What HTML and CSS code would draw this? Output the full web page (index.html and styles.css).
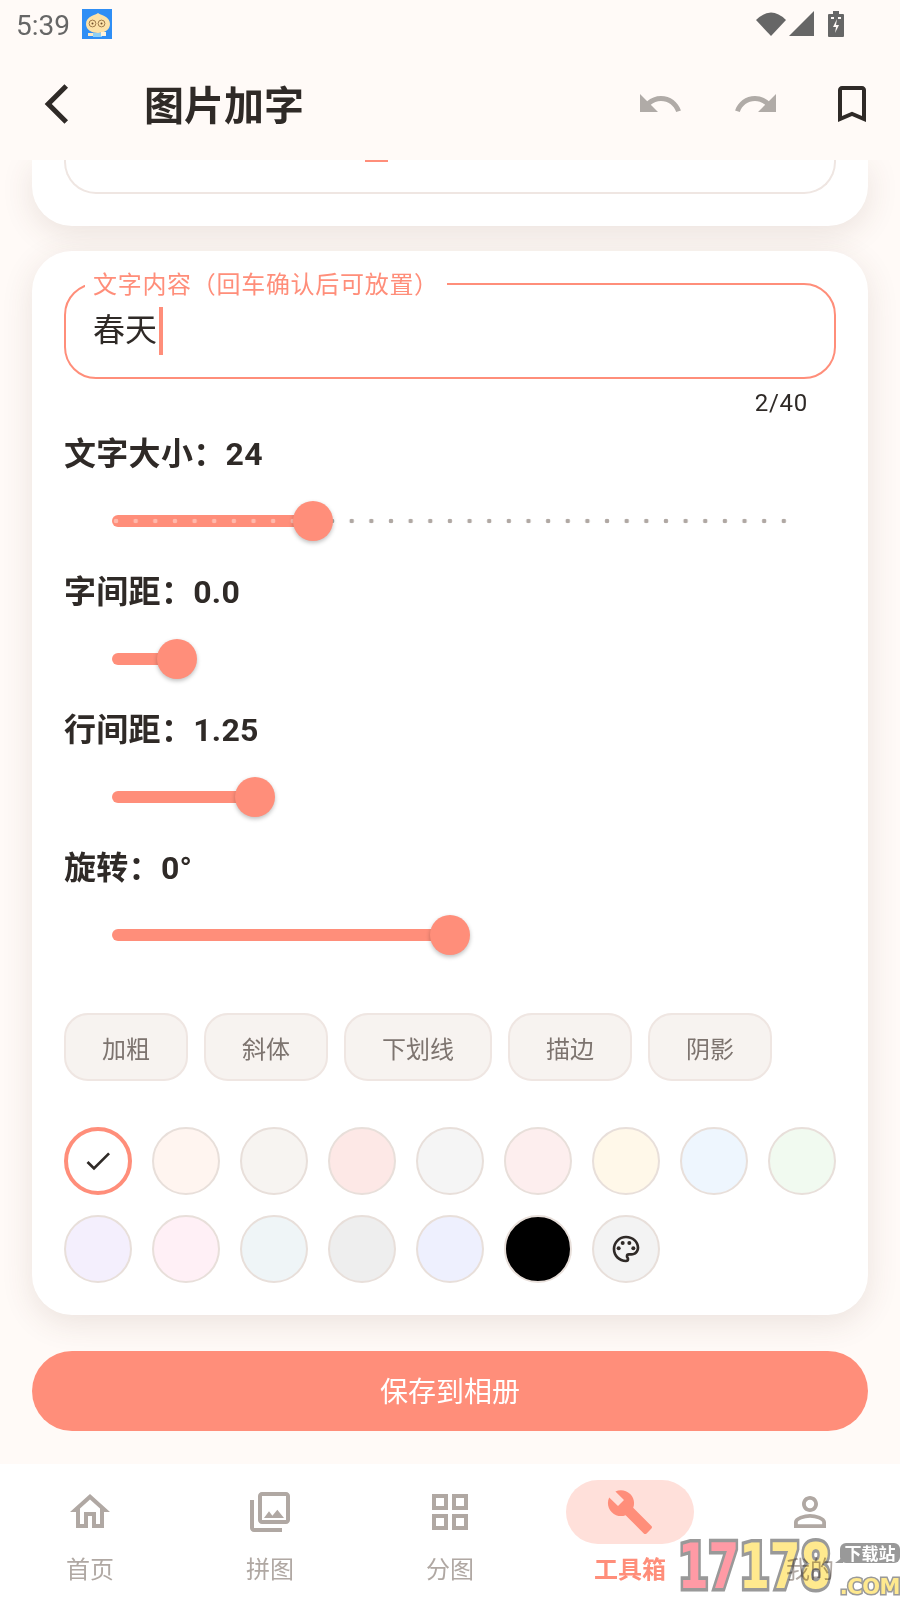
FILE: index.html
```html
<!DOCTYPE html>
<html lang="zh-CN">
<head>
<meta charset="UTF-8">
<meta name="viewport" content="width=device-width, initial-scale=1.0">
<title>图片加字</title>
<link rel="stylesheet" href="styles.css">
</head>
<body>

<div class="status-bar">
    <span class="clock">5:39</span>
    <svg class="app-badge" width="30" height="30" viewBox="0 0 30 30">
        <rect width="30" height="30" fill="#2f8ef5"/>
        <path d="M16 4c2 2 12 3 12 11 0 6-6 9-12 9S4 21 4 15C4 7 14 6 16 4z" fill="#fde2a8"/>
        <circle cx="10.500" cy="14.500" r="3.400" fill="none" stroke="#a07c4c"/>
        <circle cx="19.500" cy="14.500" r="3.400" fill="none" stroke="#a07c4c"/>
        <circle cx="10.500" cy="14.500" r="1" fill="#6b4a2a"/>
        <circle cx="19.500" cy="14.500" r="1" fill="#6b4a2a"/>
        <rect x="11" y="24" width="9" height="4" fill="#8fd0f5"/>
        <rect x="6" y="24" width="5" height="3" fill="#fde9c4"/>
        <rect x="19" y="23" width="5" height="4" fill="#fff3dc"/>
    </svg>
    <span class="status-right">
        <svg class="wifi" width="30" height="25" viewBox="0 0 30 25"><path d="M0 9Q15-6 30 9L15 25z" fill="#666"/></svg>
        <svg class="signal" width="25" height="25" viewBox="0 0 25 25"><path d="M25 0v25H0z" fill="#666"/></svg>
        <svg class="battery" width="16" height="26" viewBox="0 0 16 26">
            <path d="M5 0h6v3h4a1 1 0 0 1 1 1v21a1 1 0 0 1-1 1H1a1 1 0 0 1-1-1V4a1 1 0 0 1 1-1h4z" fill="#666"/>
            <path d="M9 8l-4 8h3l-1 6 4-8H8z" fill="#fffaf7"/>
            <path d="M3 6h3v2H3zM10 6h3v2h-3z" fill="#fffaf7"/>
        </svg>
    </span>
</div>

<header class="top-bar">
    <svg class="back-icon" width="48" height="48" viewBox="0 0 24 24"><path d="M17.51 3.87L15.73 2.1 5.84 12l9.9 9.9 1.77-1.77L9.38 12l8.13-8.13z"/></svg>
    <h1>图片加字</h1>
    <div class="top-actions">
        <svg class="muted-icon" width="48" height="48" viewBox="0 0 24 24"><path d="M12.5 8c-2.65 0-5.05.99-6.9 2.6L2 7v9h9l-3.62-3.62c1.39-1.16 3.16-1.88 5.12-1.88 3.54 0 6.55 2.31 7.6 5.5l2.37-.78C21.08 11.03 17.15 8 12.5 8z"/></svg>
        <svg class="muted-icon" width="48" height="48" viewBox="0 0 24 24"><path d="M18.4 10.6C16.55 8.99 14.15 8 11.5 8c-4.65 0-8.58 3.03-9.96 7.22L3.9 16c1.05-3.19 4.05-5.5 7.6-5.5 1.95 0 3.73.72 5.12 1.88L13 16h9V7l-3.6 3.6z"/></svg>
        <svg class="dark-icon" width="48" height="48" viewBox="0 0 24 24"><path d="M17 3H7c-1.1 0-2 .9-2 2v16l7-3 7 3V5c0-1.1-.9-2-2-2zm0 15l-5-2.18L7 18V5h10v13z"/></svg>
    </div>
</header>

<main class="content">
    <section class="card card-clipped">
        <div class="clipped-box"><span class="clipped-mark"></span></div>
    </section>

    <section class="card card-editor">
        <div class="text-field">
            <span class="field-label">文字内容（回车确认后可放置）</span>
            <span class="field-value">春天</span><span class="caret"></span>
        </div>
        <div class="counter">2/40</div>

        <div class="setting-title">文字大小：24</div>
        <div class="slider slider-ticks">
            <div class="track track-ticks" style="width:201px"><span class="thumb"></span></div>
        </div>

        <div class="setting-title">字间距：0.0</div>
        <div class="slider">
            <div class="track" style="width:65px"><span class="thumb"></span></div>
        </div>

        <div class="setting-title">行间距：1.25</div>
        <div class="slider">
            <div class="track" style="width:143px"><span class="thumb"></span></div>
        </div>

        <div class="setting-title">旋转：0°</div>
        <div class="slider">
            <div class="track" style="width:338px"><span class="thumb"></span></div>
        </div>

        <div class="chips">
            <span class="chip">加粗</span>
            <span class="chip">斜体</span>
            <span class="chip">下划线</span>
            <span class="chip">描边</span>
            <span class="chip">阴影</span>
        </div>

        <div class="swatches">
            <span class="swatch swatch-selected">
                <svg width="32" height="32" viewBox="0 0 24 24"><path d="M9 16.17L4.83 12l-1.42 1.41L9 19 21 7l-1.41-1.41z" fill="#2f2a27"/></svg>
            </span>
            <span class="swatch c-peach"></span>
            <span class="swatch c-stone"></span>
            <span class="swatch c-rose"></span>
            <span class="swatch c-grey"></span>
            <span class="swatch c-blush"></span>
            <span class="swatch c-cream"></span>
            <span class="swatch c-sky"></span>
            <span class="swatch c-mint"></span>
            <span class="swatch c-lilac"></span>
            <span class="swatch c-pink"></span>
            <span class="swatch c-ice"></span>
            <span class="swatch c-silver"></span>
            <span class="swatch c-periwinkle"></span>
            <span class="swatch c-black"></span>
            <span class="swatch c-picker">
                <svg width="32" height="32" viewBox="0 0 24 24" fill="#2f2a27">
                    <path d="M12 22C6.49 22 2 17.51 2 12S6.49 2 12 2s10 4.04 10 9c0 3.31-2.69 6-6 6h-1.77c-.28 0-.5.22-.5.5 0 .12.05.23.13.33.41.47.64 1.06.64 1.67A2.5 2.5 0 0 1 12 22zm0-18c-4.41 0-8 3.59-8 8s3.59 8 8 8c.28 0 .5-.22.5-.5a.54.54 0 0 0-.14-.35c-.41-.46-.63-1.05-.63-1.65a2.5 2.5 0 0 1 2.5-2.5H16c2.21 0 4-1.79 4-4 0-3.86-3.59-7-8-7z"/>
                    <circle cx="6.5" cy="11.5" r="1.5"/><circle cx="9.5" cy="7.5" r="1.5"/><circle cx="14.5" cy="7.5" r="1.5"/><circle cx="17.5" cy="11.5" r="1.5"/>
                </svg>
            </span>
        </div>
    </section>

    <button class="save-button">保存到相册</button>
</main>

<nav class="bottom-nav">
    <div class="nav-item">
        <span class="nav-icon"><svg width="48" height="48" viewBox="0 0 24 24"><path d="M12 5.69l5 4.5V18h-2v-6H9v6H7v-7.81l5-4.5M12 3L2 12h3v8h6v-6h2v6h6v-8h3L12 3z"/></svg></span>
        <span class="nav-label">首页</span>
    </div>
    <div class="nav-item">
        <span class="nav-icon"><svg width="48" height="48" viewBox="0 0 24 24"><path d="M20 4v12H8V4h12m0-2H8c-1.1 0-2 .9-2 2v12c0 1.1.9 2 2 2h12c1.1 0 2-.9 2-2V4c0-1.1-.9-2-2-2zm-8.5 9.67l1.69 2.26 2.48-3.1L19 15H9zM2 6v14c0 1.1.9 2 2 2h14v-2H4V6H2z"/></svg></span>
        <span class="nav-label">拼图</span>
    </div>
    <div class="nav-item">
        <span class="nav-icon"><svg width="48" height="48" viewBox="0 0 24 24"><path d="M3 3v8h8V3H3zm6 6H5V5h4v4zm-6 4v8h8v-8H3zm6 6H5v-4h4v4zm4-16v8h8V3h-8zm6 6h-4V5h4v4zm-6 4v8h8v-8h-8zm6 6h-4v-4h4v4z"/></svg></span>
        <span class="nav-label">分图</span>
    </div>
    <div class="nav-item nav-active">
        <span class="nav-icon"><svg width="48" height="48" viewBox="0 0 24 24"><path d="M22.7 19l-9.1-9.1c.9-2.3.4-5-1.5-6.9-2-2-5-2.4-7.4-1.3L9 6 6 9 1.6 4.7C.4 7.1.9 10.1 2.9 12.1c1.9 1.9 4.6 2.4 6.9 1.5l9.1 9.1c.4.4 1 .4 1.4 0l2.3-2.3c.5-.4.5-1.1.1-1.4z"/></svg></span>
        <span class="nav-label">工具箱</span>
    </div>
    <div class="nav-item">
        <span class="nav-icon"><svg width="48" height="48" viewBox="0 0 24 24"><path d="M12 5.9a2.1 2.1 0 1 1 0 4.2 2.1 2.1 0 0 1 0-4.2m0 9c2.97 0 6.1 1.46 6.1 2.1v1.1H5.9V17c0-.64 3.13-2.1 6.1-2.1M12 4C9.79 4 8 5.79 8 8s1.79 4 4 4 4-1.79 4-4-1.79-4-4-4zm0 9c-2.67 0-8 1.34-8 4v3h16v-3c0-2.66-5.33-4-8-4z"/></svg></span>
        <span class="nav-label">我的</span>
    </div>

    <div class="watermark">
        <div class="wm-digits"><span class="wm-pink">17</span><span class="wm-yellow">178</span></div>
        <div class="wm-side">
            <span class="wm-tag">下载站</span>
            <span class="wm-com">.COM</span>
        </div>
    </div>
</nav>

</body>
</html>
```

FILE: styles.css
```css
* {
    box-sizing: border-box;
}
body {
    font-family: Roboto, "Noto Sans CJK SC", sans-serif;
    background-color: #fffaf7;
    color: #2f2a27;
    margin: 0;
    padding: 0;
    width: 900px;
    height: 1600px;
    display: flex;
    flex-direction: column;
    overflow: hidden;
}

/* status bar */
.status-bar {
    height: 48px;
    display: flex;
    align-items: center;
    padding: 2px 56px 0 16px;
}
.clock {
    font-size: 28px;
    color: #666;
    width: 66px;
}
.app-badge {
    margin-top: -2px;
}
.status-right {
    margin-left: auto;
    display: flex;
    align-items: center;
}
.wifi {
    margin-top: -3px;
}
.signal {
    margin-left: 3px;
    margin-top: -3px;
}
.battery {
    margin-left: 14px;
    margin-top: -2px;
}

/* top bar */
.top-bar {
    height: 112px;
    display: flex;
    align-items: center;
    padding: 0 24px 0 33px;
    position: relative;
    z-index: 2;
    background-color: #fffaf7;
}
.back-icon {
    fill: #2f2a27;
}
.top-bar h1 {
    font-size: 40px;
    font-weight: 700;
    margin: -2px 0 0 63px;
    color: #2f2a27;
}
.top-actions {
    margin-left: auto;
    display: flex;
    gap: 48px;
}
.muted-icon {
    fill: #b0aba7;
}
.dark-icon {
    fill: #2f2a27;
}

/* cards */
.content {
    flex: 1;
    padding: 0 32px;
}
.card {
    background-color: #fff;
    box-shadow: 0 8px 32px rgba(90, 60, 45, 0.12);
}
.card-clipped {
    height: 66px;
    padding: 0 32px;
    border-radius: 0 0 40px 40px;
    margin-bottom: 25px;
}
.clipped-box {
    height: 34px;
    border: 2px solid #efe6e2;
    border-top: 0;
    border-radius: 0 0 32px 32px;
    display: flex;
    justify-content: center;
}
.clipped-mark {
    width: 23px;
    height: 2px;
    background-color: #ff8e7a;
    margin-left: -148px;
}
.card-editor {
    height: 1064px;
    padding: 32px;
    border-radius: 40px;
}

/* text field */
.text-field {
    position: relative;
    height: 96px;
    border: 2px solid #ff8e7a;
    border-radius: 32px;
    padding: 0 0 0 27px;
    display: flex;
    align-items: center;
}
.field-label {
    position: absolute;
    left: 19px;
    top: -15px;
    padding: 0 8px;
    background-color: #fff;
    font-size: 24px;
    letter-spacing: 0.7px;
    line-height: 30px;
    color: #ff8e7a;
}
.field-value {
    font-size: 32px;
    margin-top: -8px;
}
.caret {
    width: 4px;
    height: 48px;
    margin-left: 2px;
    background-color: #ff8e7a;
}
.counter {
    font-size: 24px;
    letter-spacing: 0.7px;
    line-height: 32px;
    text-align: right;
    padding-right: 28px;
    margin: 8px 0 13px;
}

/* sliders */
.setting-title {
    font-size: 32px;
    font-weight: 700;
    letter-spacing: 0.3px;
    line-height: 44px;
}
.slider {
    height: 90px;
    width: 676px;
    margin: 0 0 4px 48px;
    display: flex;
    align-items: center;
}
.slider-ticks {
    background-image: radial-gradient(circle, #b0a8a3 2px, transparent 2.6px);
    background-size: 19.65px 8px;
    background-position: -5.8px center;
    background-repeat: repeat-x;
}
.track {
    position: relative;
    height: 12px;
    border-radius: 6px 0 0 6px;
    background-color: #ff8e7a;
}
.track-ticks {
    background-image: radial-gradient(circle, #ffb9ac 2px, transparent 2.6px);
    background-size: 19.65px 8px;
    background-position: -5.8px center;
    background-repeat: repeat-x;
}
.thumb {
    position: absolute;
    right: -20px;
    top: -14px;
    width: 40px;
    height: 40px;
    border-radius: 50%;
    background-color: #ff8e7a;
    box-shadow: 0 2px 4px rgba(0, 0, 0, 0.25);
}

/* style chips */
.chips {
    display: flex;
    gap: 16px;
    margin-top: 33px;
}
.chip {
    height: 68px;
    padding: 0 36px;
    display: flex;
    align-items: center;
    font-size: 24px;
    color: #7d746f;
    background-color: #f7f3f0;
    border: 2px solid #efe6e2;
    border-radius: 24px;
}

/* colour swatches */
.swatches {
    display: grid;
    grid-template-columns: repeat(9, 68px);
    gap: 20px;
    margin-top: 46px;
}
.swatch {
    width: 68px;
    height: 68px;
    border-radius: 50%;
    border: 2px solid #e8dfda;
    display: flex;
    align-items: center;
    justify-content: center;
}
.swatch-selected {
    background-color: #fff;
    border: 4px solid #ff8e7a;
}
.c-peach { background-color: #fff5f0; }
.c-stone { background-color: #f7f4f1; }
.c-rose { background-color: #fde8e6; }
.c-grey { background-color: #f5f5f5; }
.c-blush { background-color: #fdeeee; }
.c-cream { background-color: #fff8e9; }
.c-sky { background-color: #eef6fe; }
.c-mint { background-color: #f1faf0; }
.c-lilac { background-color: #f4effd; }
.c-pink { background-color: #fff0f6; }
.c-ice { background-color: #eff5f7; }
.c-silver { background-color: #eeeeee; }
.c-periwinkle { background-color: #eef0fe; }
.c-black { background-color: #000; }
.c-picker { background-color: #f3f3f3; }

/* save button */
.save-button {
    display: block;
    width: 100%;
    height: 80px;
    margin-top: 36px;
    padding: 0 0 2px;
    border: 0;
    border-radius: 40px;
    background-color: #ff8e7a;
    color: #fff;
    font-family: inherit;
    font-size: 28px;
}

/* bottom nav */
.bottom-nav {
    position: relative;
    height: 136px;
    background-color: #fff;
    display: grid;
    grid-template-columns: repeat(5, 1fr);
    padding: 16px 0 0;
    overflow: hidden;
}
.nav-item {
    display: flex;
    flex-direction: column;
    align-items: center;
}
.nav-icon {
    width: 128px;
    height: 64px;
    border-radius: 32px;
    display: flex;
    align-items: center;
    justify-content: center;
    fill: #b0a8a3;
}
.nav-label {
    font-size: 24px;
    line-height: 32px;
    margin-top: 10px;
    color: #b0a8a3;
}
.nav-active .nav-icon {
    background-color: #ffe0da;
    fill: #ff8e7a;
}
.nav-active .nav-label {
    color: #ff8e7a;
    font-weight: 700;
}

/* download site watermark */
.watermark {
    position: absolute;
    right: 0;
    bottom: 0;
    width: 222px;
    height: 60px;
    display: flex;
    mix-blend-mode: multiply;
    font-family: "DejaVu Sans", sans-serif;
    font-weight: 700;
}
.wm-digits {
    width: 157px;
    font-size: 44px;
    line-height: 60px;
    transform: scaleY(1.4);
    transform-origin: center 62%;
    white-space: nowrap;
    -webkit-text-stroke: 5px #999;
    paint-order: stroke fill;
}
.wm-pink {
    color: #ff9aa5;
}
.wm-yellow {
    color: #ffe98e;
}
.wm-side {
    flex: 1;
    display: flex;
    flex-direction: column;
    align-items: flex-end;
}
.wm-tag {
    position: relative;
    width: 60px;
    height: 20px;
    margin-top: 3px;
    border-radius: 6px;
    background-color: #999;
    color: #fff;
    font-family: "Noto Sans CJK SC", sans-serif;
    font-size: 17px;
    line-height: 20px;
    text-align: center;
}
.wm-tag::after {
    content: "";
    position: absolute;
    left: -5px;
    bottom: 0;
    border-left: 8px solid transparent;
    border-bottom: 6px solid #999;
}
.wm-com {
    font-size: 21px;
    line-height: 24px;
    margin-top: 12px;
    color: #ffe98e;
    letter-spacing: -0.5px;
    -webkit-text-stroke: 3px #999;
    paint-order: stroke fill;
    white-space: nowrap;
}
```
